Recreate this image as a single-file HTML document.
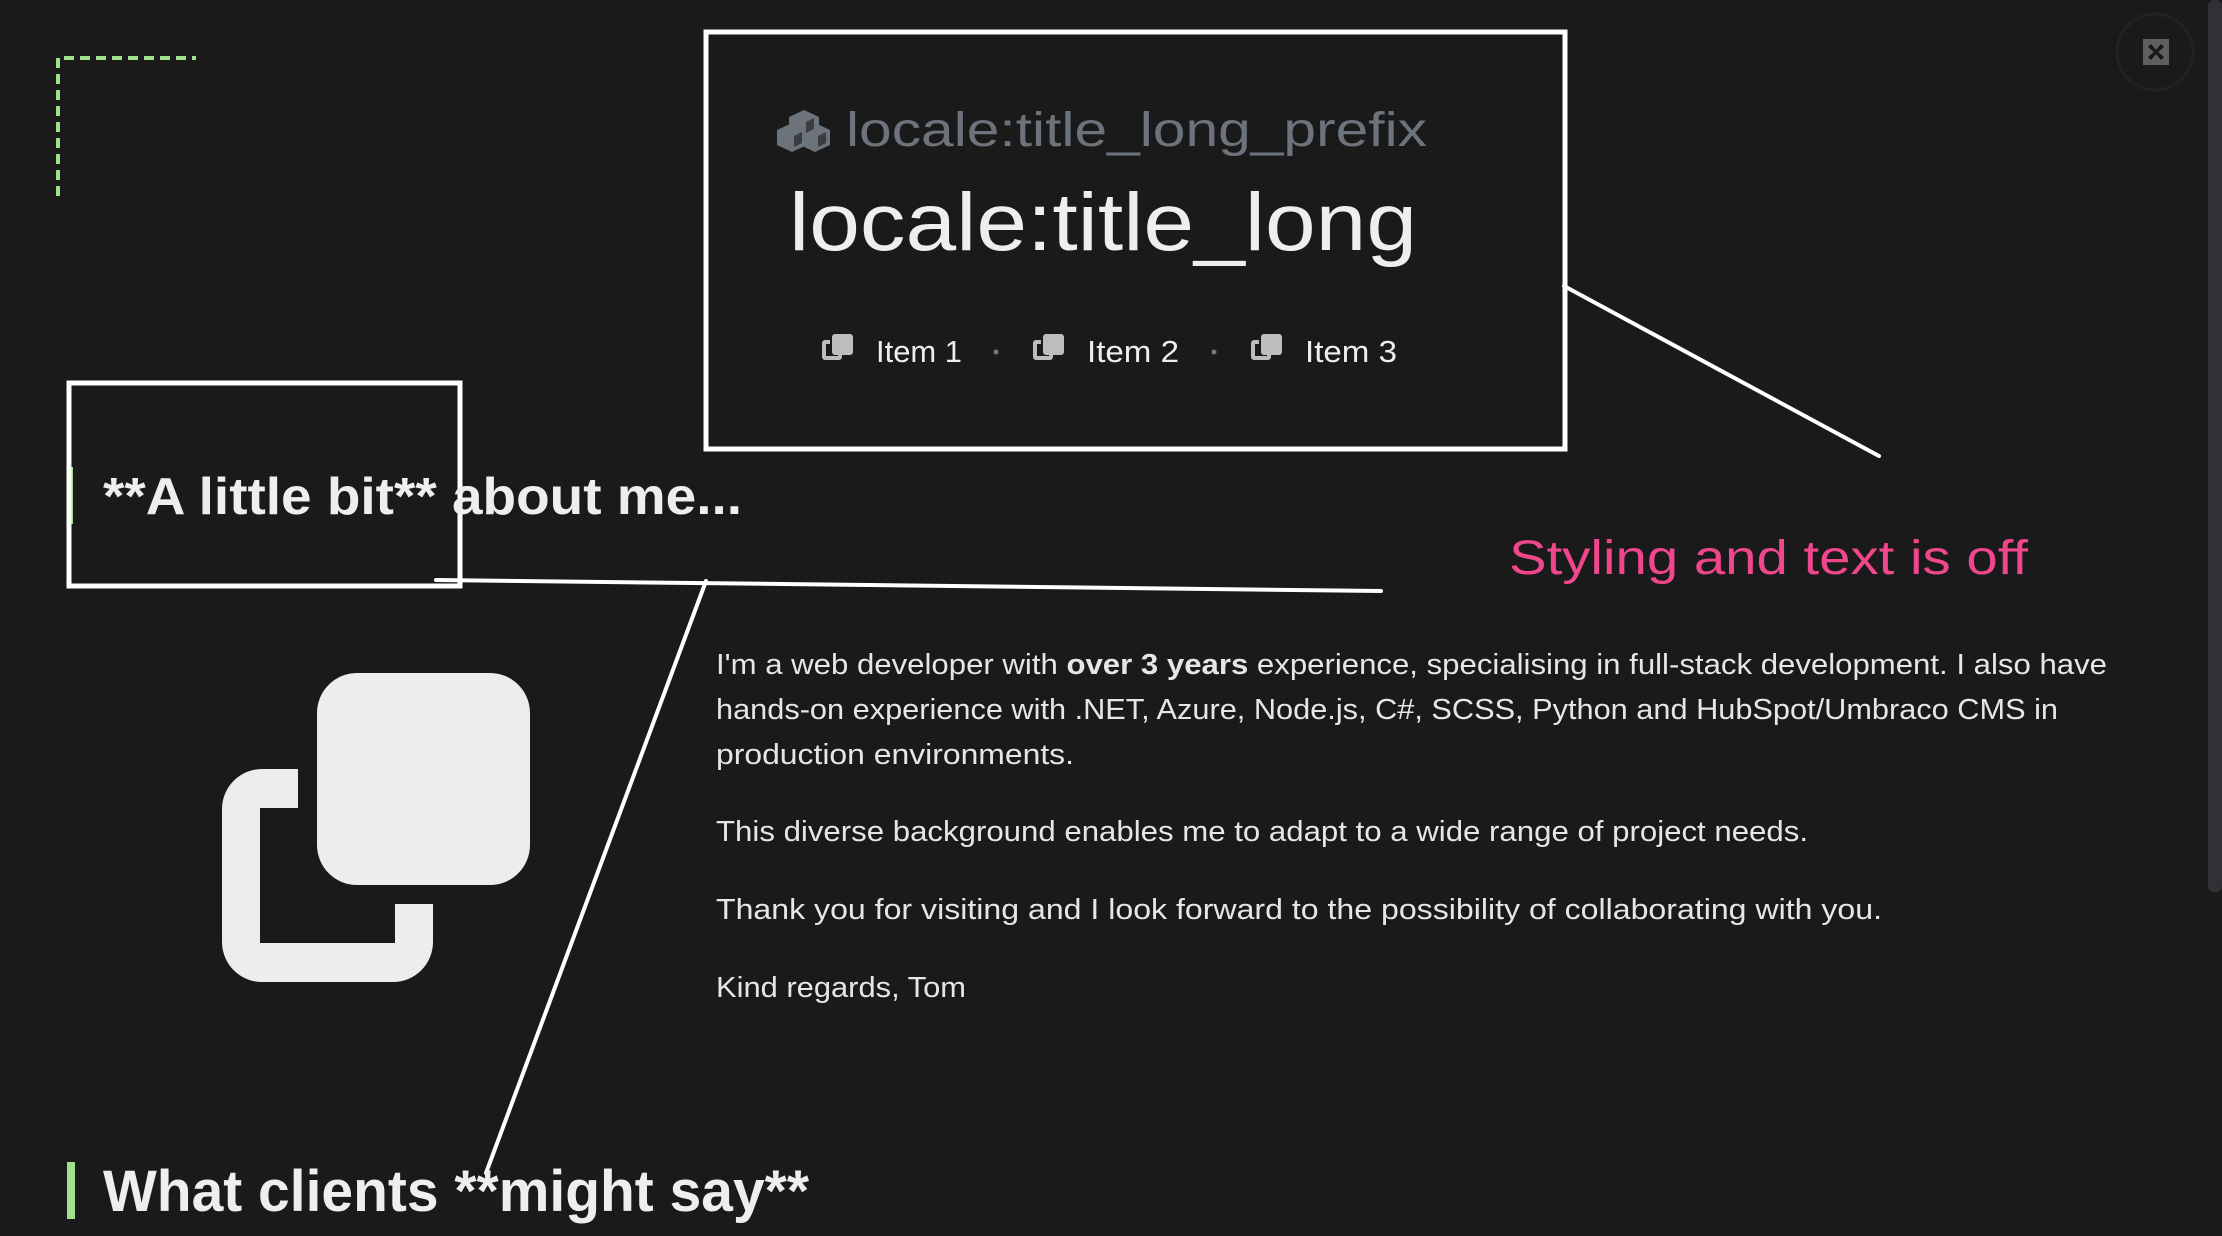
<!DOCTYPE html>
<html><head><meta charset="utf-8"><style>
html,body{margin:0;padding:0;background:#1a1a1a;width:2222px;height:1236px;overflow:hidden}
svg{display:block}
text{font-family:"Liberation Sans",sans-serif}
</style></head><body>
<svg width="2222" height="1236" viewBox="0 0 2222 1236" xmlns="http://www.w3.org/2000/svg">
<rect width="2222" height="1236" fill="#1a1a1a"/>
<rect x="2208" y="0" width="14" height="892" rx="6" fill="#2f3136"/>
<circle cx="2155" cy="52" r="38" fill="none" stroke="#222" stroke-width="3"/>
<rect x="2143" y="39" width="26" height="26" fill="#5f5f5f"/>
<path d="M2150 45 L2156 52 L2150 59 M2162 45 L2156 52 L2162 59 M2149 46 L2163 58 M2163 46 L2149 58" stroke="#1a1a1a" stroke-width="3" fill="none"/>
<path d="M58 196 V58 H196" fill="none" stroke="#9fe08a" stroke-width="4" stroke-dasharray="10 6"/>

<rect x="706" y="32" width="859" height="417" fill="none" stroke="#fff" stroke-width="5"/>
<g fill="#6c737a">
<path d="M804 110 L819 117 L819 132 L804 139 L789 132 L789 117Z"/>
<path d="M792 130 L807 137 L807 152 L792 159 L777 152 L777 137Z" transform="translate(0,-7)"/>
<path d="M816 130 L831 137 L831 152 L816 159 L801 152 L801 137Z" transform="translate(-1,-7)"/>
</g>
<g fill="#1a1a1a" opacity="0.6">
<path d="M806 122 L814 118 L814 129 L806 133Z"/><path d="M794 136 L802 132 L802 143 L794 147Z"/><path d="M818 136 L826 132 L826 143 L818 147Z"/>
</g>
<text x="846" y="146" font-size="48" fill="#6c737a" textLength="581" lengthAdjust="spacingAndGlyphs">locale:title_long_prefix</text>
<text x="789" y="250" font-size="82" fill="#eeeeee" textLength="628" lengthAdjust="spacingAndGlyphs">locale:title_long</text>
<g fill="#bdbdbd">
<path d="M822 343 a3 3 0 0 1 3 -3 h5 v4 h-4 v12 h12 v-3 h4 v4 a3 3 0 0 1 -3 3 h-14 a3 3 0 0 1 -3 -3z"/><rect x="832" y="334" width="21" height="21" rx="3"/>
<path transform="translate(211,0)" d="M822 343 a3 3 0 0 1 3 -3 h5 v4 h-4 v12 h12 v-3 h4 v4 a3 3 0 0 1 -3 3 h-14 a3 3 0 0 1 -3 -3z"/><rect x="1043" y="334" width="21" height="21" rx="3"/>
<path transform="translate(429,0)" d="M822 343 a3 3 0 0 1 3 -3 h5 v4 h-4 v12 h12 v-3 h4 v4 a3 3 0 0 1 -3 3 h-14 a3 3 0 0 1 -3 -3z"/><rect x="1261" y="334" width="21" height="21" rx="3"/>
</g>
<g fill="#eeeeee" font-size="31">
<text x="876" y="362" textLength="86" lengthAdjust="spacingAndGlyphs">Item 1</text>
<text x="1087" y="362" textLength="92" lengthAdjust="spacingAndGlyphs">Item 2</text>
<text x="1305" y="362" textLength="92" lengthAdjust="spacingAndGlyphs">Item 3</text>
</g>
<circle cx="996" cy="352" r="2.5" fill="#777"/><circle cx="1214" cy="352" r="2.5" fill="#777"/>

<line x1="1564" y1="286" x2="1879" y2="456" stroke="#fff" stroke-width="4" stroke-linecap="round"/>
<line x1="436" y1="580" x2="1381" y2="591" stroke="#fff" stroke-width="4" stroke-linecap="round"/>
<line x1="706" y1="581" x2="486" y2="1173" stroke="#fff" stroke-width="4" stroke-linecap="round"/>

<text x="1509" y="574" font-size="48" fill="#f0468c" textLength="519" lengthAdjust="spacingAndGlyphs">Styling and text is off</text>

<rect x="69" y="467" width="4" height="57" fill="#9fe08a"/>
<rect x="69" y="383" width="391" height="203" fill="none" stroke="#fff" stroke-width="5"/>
<text x="103" y="514" font-size="52" font-weight="bold" fill="#eeeeee" textLength="639" lengthAdjust="spacingAndGlyphs">**A little bit** about me...</text>

<path fill="#ededed" fill-rule="evenodd" d="M262 769 H393 A40 40 0 0 1 433 809 V942 A40 40 0 0 1 393 982 H262 A40 40 0 0 1 222 942 V809 A40 40 0 0 1 262 769Z M260 808 V943 H395 V808Z"/>
<rect x="298" y="655" width="250" height="249" fill="#1a1a1a"/>
<rect x="317" y="673" width="213" height="212" rx="40" fill="#ededed"/>

<g font-size="29" fill="#e6e6e6">
<text x="716" y="674" textLength="1391" lengthAdjust="spacingAndGlyphs">I'm a web developer with <tspan font-weight="bold">over 3 years</tspan> experience, specialising in full-stack development. I also have</text>
<text x="716" y="719" textLength="1342" lengthAdjust="spacingAndGlyphs">hands-on experience with .NET, Azure, Node.js, C#, SCSS, Python and HubSpot/Umbraco CMS in</text>
<text x="716" y="764" textLength="358" lengthAdjust="spacingAndGlyphs">production environments.</text>
<text x="716" y="841" textLength="1092" lengthAdjust="spacingAndGlyphs">This diverse background enables me to adapt to a wide range of project needs.</text>
<text x="716" y="919" textLength="1166" lengthAdjust="spacingAndGlyphs">Thank you for visiting and I look forward to the possibility of collaborating with you.</text>
<text x="716" y="997" textLength="250" lengthAdjust="spacingAndGlyphs">Kind regards, Tom</text>
</g>

<rect x="67" y="1162" width="8" height="57" fill="#9fe08a"/>
<text x="103" y="1211" font-size="58" font-weight="bold" fill="#eeeeee" textLength="706" lengthAdjust="spacingAndGlyphs">What clients **might say**</text>
</svg>
</body></html>
